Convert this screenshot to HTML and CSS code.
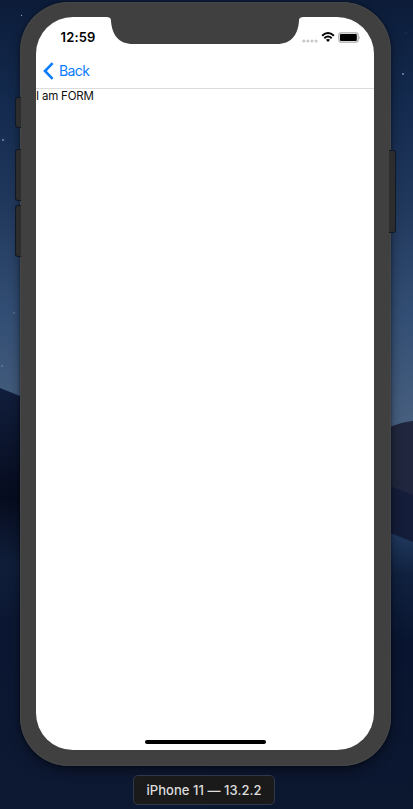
FILE: index.html
```html
<!DOCTYPE html>
<html lang="en">
<head>
<meta charset="utf-8">
<title>iPhone 11 — 13.2.2</title>
<link rel="stylesheet" href="styles.css">
</head>
<body>
<main class="desktop">
  <svg class="wallpaper" viewBox="0 0 413 809" aria-hidden="true">
    <defs>
      <linearGradient id="sky" x1="0" y1="0" x2="0" y2="420" gradientUnits="userSpaceOnUse">
        <stop offset="0" stop-color="#0c1c39"/><stop offset=".25" stop-color="#142b4f"/>
        <stop offset=".5" stop-color="#21395d"/><stop offset=".75" stop-color="#334e74"/><stop offset="1" stop-color="#465f7f"/>
      </linearGradient>
      <linearGradient id="duneLeft" x1="0" y1="388" x2="0" y2="809" gradientUnits="userSpaceOnUse">
        <stop offset="0" stop-color="#111e3c"/><stop offset=".26" stop-color="#060c1f"/>
        <stop offset=".42" stop-color="#101e3a"/><stop offset=".56" stop-color="#0b1732"/><stop offset="1" stop-color="#0d1832"/>
      </linearGradient>
      <linearGradient id="duneRight" x1="0" y1="533" x2="0" y2="809" gradientUnits="userSpaceOnUse">
        <stop offset="0" stop-color="#213a60"/><stop offset=".15" stop-color="#10213f"/>
        <stop offset=".4" stop-color="#091530"/><stop offset="1" stop-color="#0c1730"/>
      </linearGradient>
    </defs>
    <rect width="413" height="809" fill="url(#sky)"/>
    <path d="M0 388 L20 396 L207 460 V809 H0Z" fill="url(#duneLeft)"/>
    <path d="M207 470 L390 427 Q402 422 413 421 V809 H207Z" fill="#20263d"/>
    <path d="M207 440 L390 486 L413 495 V809 H207Z" fill="#141d39"/>
    <path d="M207 490 L390 533 L413 542 V809 H207Z" fill="url(#duneRight)"/>
    <g fill="#8498b2"><circle cx="21.5" cy="15.5" r=".7"/><circle cx="3" cy="140" r=".9"/><circle cx="14" cy="313" r=".7"/><circle cx="2" cy="366" r=".8"/><circle cx="403" cy="74" r=".9"/><circle cx="406" cy="33" r=".5" opacity=".4"/></g>
  </svg>
  <section class="phone">
    <i class="button mute"></i>
    <i class="button volume-up"></i>
    <i class="button volume-down"></i>
    <i class="button power"></i>
    <div class="screen">
      <svg class="notch" viewBox="0 0 200 27" aria-hidden="true"><path d="M0 0H200C195 0 194 1 194 4C193 18 186 27 172 27H28C14 27 7 18 6 4C6 1 5 0 0 0Z" fill="#404040"/></svg>
      <header class="status">
        <time class="clock">12:59</time>
        <div class="indicators">
          <svg width="16" height="4" viewBox="0 0 16 4" fill="#c8c8c8"><circle cx="1.8" cy="2" r="1.55"/><circle cx="5.9" cy="2" r="1.55"/><circle cx="10" cy="2" r="1.55"/><circle cx="14.1" cy="2" r="1.55"/></svg>
          <svg class="wifi" width="14" height="10" viewBox="0 0 14 10"><g fill="none" stroke="#000" stroke-width="1.9"><path d="M1.1 3.8Q7-1.6 12.9 3.8"/><path d="M3.3 6.2Q7 2.9 10.7 6.2"/></g><path d="M4.9 7.8Q7 6.1 9.1 7.8L7 9.9Z"/></svg>
          <svg class="battery" width="23" height="11" viewBox="0 0 23 11"><rect x=".8" y=".8" width="19.4" height="9.4" rx="2.6" fill="#eee" stroke="#bdbdbd" stroke-width="1.5"/><rect x="2" y="2" width="16.8" height="7" rx="1"/><path d="M21.3 3.9Q22.8 5.5 21.3 7.1Z" fill="#999"/></svg>
        </div>
      </header>
      <nav class="navbar">
        <a class="back"><svg width="11" height="18" viewBox="0 0 11 18"><path d="M9.6 1.2L2 9L9.6 16.8" fill="none" stroke="#0a7cff" stroke-width="2.6"/></svg><span>Back</span></a>
      </nav>
      <div class="content">I am FORM</div>
      <div class="home"></div>
    </div>
  </section>
  <div class="device-name">iPhone 11 — 13.2.2</div>
</main>
</body>
</html>
```
FILE: styles.css
```css
* { box-sizing: border-box; }
body { margin: 0; font-family: Inter, "Liberation Sans", sans-serif; }
.desktop {
  position: relative;
  display: flex;
  flex-direction: column;
  width: 413px;
  height: 809px;
  padding-top: 2px;
  overflow: hidden;
}
.wallpaper { position: absolute; inset: 0; width: 413px; height: 809px; }
.phone {
  position: relative;
  width: 370.5px;
  height: 763.5px;
  margin-left: 20px;
  padding: 15px 16.5px 15.5px 16px;
  border-radius: 49px;
  background: #404040;
  box-shadow: inset 0 0 0 1px #454648, 0 0 3px #0007, 0 5px 12px #0006;
}
.button {
  position: absolute;
  left: -4px;
  width: 5px;
  background: #2d2d2d;
  border-radius: 2px 0 0 2px;
  box-shadow: 0 0 0 1px #101826;
  clip-path: inset(-1px 0 -1px -1px);
}
.mute { top: 96px; height: 29px; }
.volume-up { top: 148px; height: 50px; }
.volume-down { top: 204px; height: 50px; }
.power {
  top: 149px;
  left: 369px;
  width: 6px;
  height: 81px;
  border-radius: 0 2px 2px 0;
  clip-path: inset(-1px -1px -1px 0);
}
.screen {
  position: relative;
  display: flex;
  flex-direction: column;
  height: 733px;
  border-radius: 37px;
  background: #fff;
  overflow: hidden;
}
.notch { position: absolute; top: 0; left: 69px; width: 200px; height: 27px; }
.status {
  display: flex;
  align-items: center;
  justify-content: space-between;
  height: 36px;
  padding: 4px 13px 0 24.5px;
}
.clock { font-size: 13px; font-weight: 600; letter-spacing: .15px; line-height: 16px; }
.indicators { display: flex; align-items: center; height: 16px; }
.indicators > svg:first-child { margin-top: 7px; }
.wifi { margin-left: 3px; }
.battery { margin-left: 3px; }
.navbar { display: flex; align-items: center; height: 36px; border-bottom: 1px solid #dcdcdc; padding-left: 7px; }
.back { display: flex; align-items: center; gap: 5px; color: #0a7cff; font-size: 14px; letter-spacing: -.6px; line-height: 18px; }
.content { color: #111; font-size: 11.5px; line-height: 15px; letter-spacing: -.2px; }
.home { width: 121px; height: 4px; margin: auto auto 6.5px 108.5px; border-radius: 2px; background: #000; }
.device-name {
  position: relative;
  display: flex;
  align-items: center;
  justify-content: center;
  width: 142px;
  height: 30px;
  margin: 9.5px 0 0 133px;
  border: 1px solid #303749;
  border-radius: 5px;
  background: #1a1a1a;
  color: #dedede;
  font-size: 13px;
  font-weight: 500;
  letter-spacing: .05px;
  white-space: nowrap;
}
```
